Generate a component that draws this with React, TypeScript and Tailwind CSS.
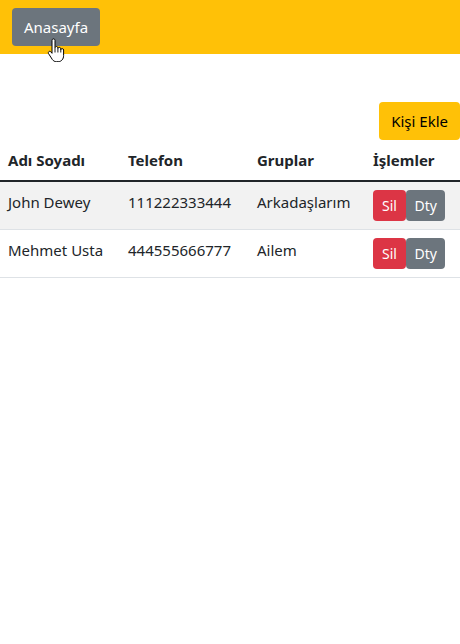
import React from "react";

const rows = [
  { name: "John Dewey", phone: "111222333444", group: "Arkadaşlarım" },
  { name: "Mehmet Usta", phone: "444555666777", group: "Ailem" },
];

function HandCursor() {
  return (
    <svg width="20" height="24" viewBox="0 0 20 24" className="absolute left-[47px] top-[38px]">
      <path
        d="M5 2.5c0-1 .7-1.6 1.5-1.6S8 1.5 8 2.5v7.2c.2-.8.8-1.2 1.5-1.2s1.4.6 1.4 1.4v.6c.2-.7.8-1.1 1.5-1.1s1.4.6 1.4 1.4v.8c.2-.6.7-1 1.4-1 .8 0 1.4.6 1.4 1.4v5.6c0 3.4-2.2 6.1-5.4 6.1H9.4c-1.7 0-3-.8-4-2.1L1.6 15.7c-.5-.7-.4-1.6.3-2.1.7-.5 1.5-.3 2 .3L5 15.3z"
        fill="#fff"
        stroke="#000"
        strokeWidth="1"
        strokeLinejoin="round"
      />
      <path d="M8 10v4.5M10.9 10.6v3.9M13.8 11.3v3.2" stroke="#000" strokeWidth="0.9" />
    </svg>
  );
}

export default function App() {
  return (
    <div className="relative min-h-[644px] bg-white text-[#212529] text-[15px] font-['Segoe_UI','Noto_Sans',sans-serif]">
      <nav className="bg-[#ffc107] px-3 py-2">
        <button className="h-[38px] px-3 rounded-[4px] bg-[#6c757d] text-white leading-6">Anasayfa</button>
      </nav>
      <HandCursor />

      <div className="flex justify-end mt-12">
        <button className="h-[38px] px-3 rounded-[4px] bg-[#ffc107] text-black leading-6">Kişi Ekle</button>
      </div>

      <table className="w-full border-collapse text-left">
        <thead>
          <tr className="border-b-2 border-[#212529]">
            <th className="w-[120px] p-2 font-bold leading-6 align-top">Adı Soyadı</th>
            <th className="w-[129px] p-2 font-bold leading-6 align-top">Telefon</th>
            <th className="w-[116px] p-2 font-bold leading-6 align-top">Gruplar</th>
            <th className="p-2 font-bold leading-6 align-top">İşlemler</th>
          </tr>
        </thead>
        <tbody>
          {rows.map((r, i) => (
            <tr key={r.phone} className={`border-b border-[#dee2e6] ${i % 2 === 0 ? "bg-[#f2f2f2]" : "bg-white"}`}>
              <td className="p-2 leading-6 align-top">{r.name}</td>
              <td className="p-2 leading-6 align-top">{r.phone}</td>
              <td className="p-2 leading-6 align-top">{r.group}</td>
              <td className="p-2 align-top">
                <div className="flex">
                  <button className="h-[31px] px-[9px] rounded-[4px] bg-[#dc3545] text-white text-[14px]">Sil</button>
                  <button className="h-[31px] px-[8.5px] rounded-[4px] bg-[#6c757d] text-white text-[14px]">Dty</button>
                </div>
              </td>
            </tr>
          ))}
        </tbody>
      </table>
    </div>
  );
}
